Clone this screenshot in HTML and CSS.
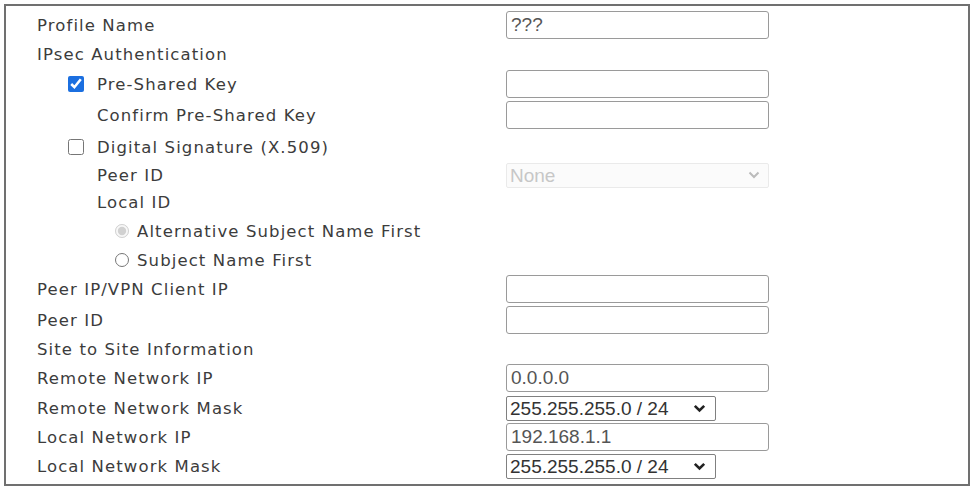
FILE: index.html
```html
<!DOCTYPE html>
<html>
<head>
<meta charset="utf-8">
<link rel="stylesheet" href="styles.css">
</head>
<body>
<div class="panel">
  <form class="grid">
    <div class="label">Profile Name</div>
    <div class="ctrl"><input class="text" type="text" value="???"></div>

    <div class="label full">IPsec Authentication</div>

    <div class="label l1"><input class="check" type="checkbox" checked><span>Pre-Shared Key</span></div>
    <div class="ctrl"><input class="text" type="password"></div>

    <div class="label l2">Confirm Pre-Shared Key</div>
    <div class="ctrl"><input class="text" type="password"></div>

    <div class="label l1 full"><input class="check" type="checkbox"><span>Digital Signature (X.509)</span></div>

    <div class="label l2">Peer ID</div>
    <div class="ctrl">
      <div class="sel sel-wide disabled">
        <select disabled><option>None</option></select>
        <svg class="chev" width="12" height="8" viewBox="0 0 12 8"><path d="M1.5 1.5 L6 6 L10.5 1.5" fill="none" stroke="#bbb" stroke-width="2"/></svg>
      </div>
    </div>

    <div class="label l2 full">Local ID</div>

    <div class="label l3 full"><input class="radio" type="radio" name="lid" checked disabled><span>Alternative Subject Name First</span></div>
    <div class="label l3 full"><input class="radio" type="radio" name="lid"><span>Subject Name First</span></div>

    <div class="label">Peer IP/VPN Client IP</div>
    <div class="ctrl"><input class="text" type="text"></div>

    <div class="label">Peer ID</div>
    <div class="ctrl"><input class="text" type="text"></div>

    <div class="label full">Site to Site Information</div>

    <div class="label">Remote Network IP</div>
    <div class="ctrl"><input class="text" type="text" value="0.0.0.0"></div>

    <div class="label">Remote Network Mask</div>
    <div class="ctrl">
      <div class="sel">
        <select><option>255.255.255.0 / 24</option></select>
        <svg class="chev" width="13" height="9" viewBox="0 0 13 9"><path d="M1.8 1.8 L6.5 6.5 L11.2 1.8" fill="none" stroke="#222" stroke-width="2.6"/></svg>
      </div>
    </div>

    <div class="label">Local Network IP</div>
    <div class="ctrl"><input class="text" type="text" value="192.168.1.1"></div>

    <div class="label">Local Network Mask</div>
    <div class="ctrl">
      <div class="sel">
        <select><option>255.255.255.0 / 24</option></select>
        <svg class="chev" width="13" height="9" viewBox="0 0 13 9"><path d="M1.8 1.8 L6.5 6.5 L11.2 1.8" fill="none" stroke="#222" stroke-width="2.6"/></svg>
      </div>
    </div>
  </form>
</div>
</body>
</html>
```
FILE: styles.css
```css
html, body {
  margin: 0;
  padding: 0;
  background: #fff;
}
.panel {
  margin: 4px 0 0 4px;
  width: 962px;
  height: 478px;
  border: 2px solid #707070;
  box-sizing: content-box;
  padding: 0;
}
.grid {
  margin: 0;
  padding: 4px 0 0 31px;
  display: grid;
  grid-template-columns: 469px 1fr;
  grid-template-rows: 30px 29px 30px 32px 32px 25px 28px 30px 28px 30px 32px 26px 32px 28px 30px 28px;
  font-family: "DejaVu Sans", Verdana, sans-serif;
  font-size: 16.5px;
  letter-spacing: 1.1px;
  color: #3c3c3c;
}
.label {
  display: flex;
  align-items: center;
  white-space: nowrap;
}
.label.full {
  grid-column: 1 / 3;
}
.l1 { padding-left: 31px; }
.l2 { padding-left: 60px; }
.l3 { padding-left: 78px; }
.ctrl {
  display: flex;
  align-items: center;
  letter-spacing: 0;
}
.check {
  width: 16px;
  height: 16px;
  margin: 0 13px 0 0;
  accent-color: #1b6fe0;
}
.radio {
  width: 14px;
  height: 14px;
  margin: 0 8px 0 0;
}
.text {
  box-sizing: border-box;
  width: 263px;
  height: 28px;
  margin: 0;
  padding: 0 4px;
  border: 1px solid #9a9a9a;
  border-radius: 3px;
  font-family: "Liberation Sans", Arial, sans-serif;
  font-size: 19px;
  letter-spacing: 0;
  color: #555;
  background: #fff;
}
.sel {
  position: relative;
  width: 210px;
  height: 25px;
}
.sel-wide {
  width: 263px;
}
.sel select {
  appearance: none;
  -webkit-appearance: none;
  box-sizing: border-box;
  width: 100%;
  height: 100%;
  margin: 0;
  padding: 0 3px;
  border: 1px solid #808080;
  border-radius: 2px;
  background: #fff;
  font-family: "Liberation Sans", Arial, sans-serif;
  font-size: 19px;
  letter-spacing: 0;
  color: #333;
}
.sel.disabled select {
  border-color: #e2e2e2;
  background: #fafafa;
  color: #b0b0b0;
}
.chev {
  position: absolute;
  right: 10px;
  top: 8px;
  pointer-events: none;
}
.sel-wide .chev {
  right: 9px;
}
```
